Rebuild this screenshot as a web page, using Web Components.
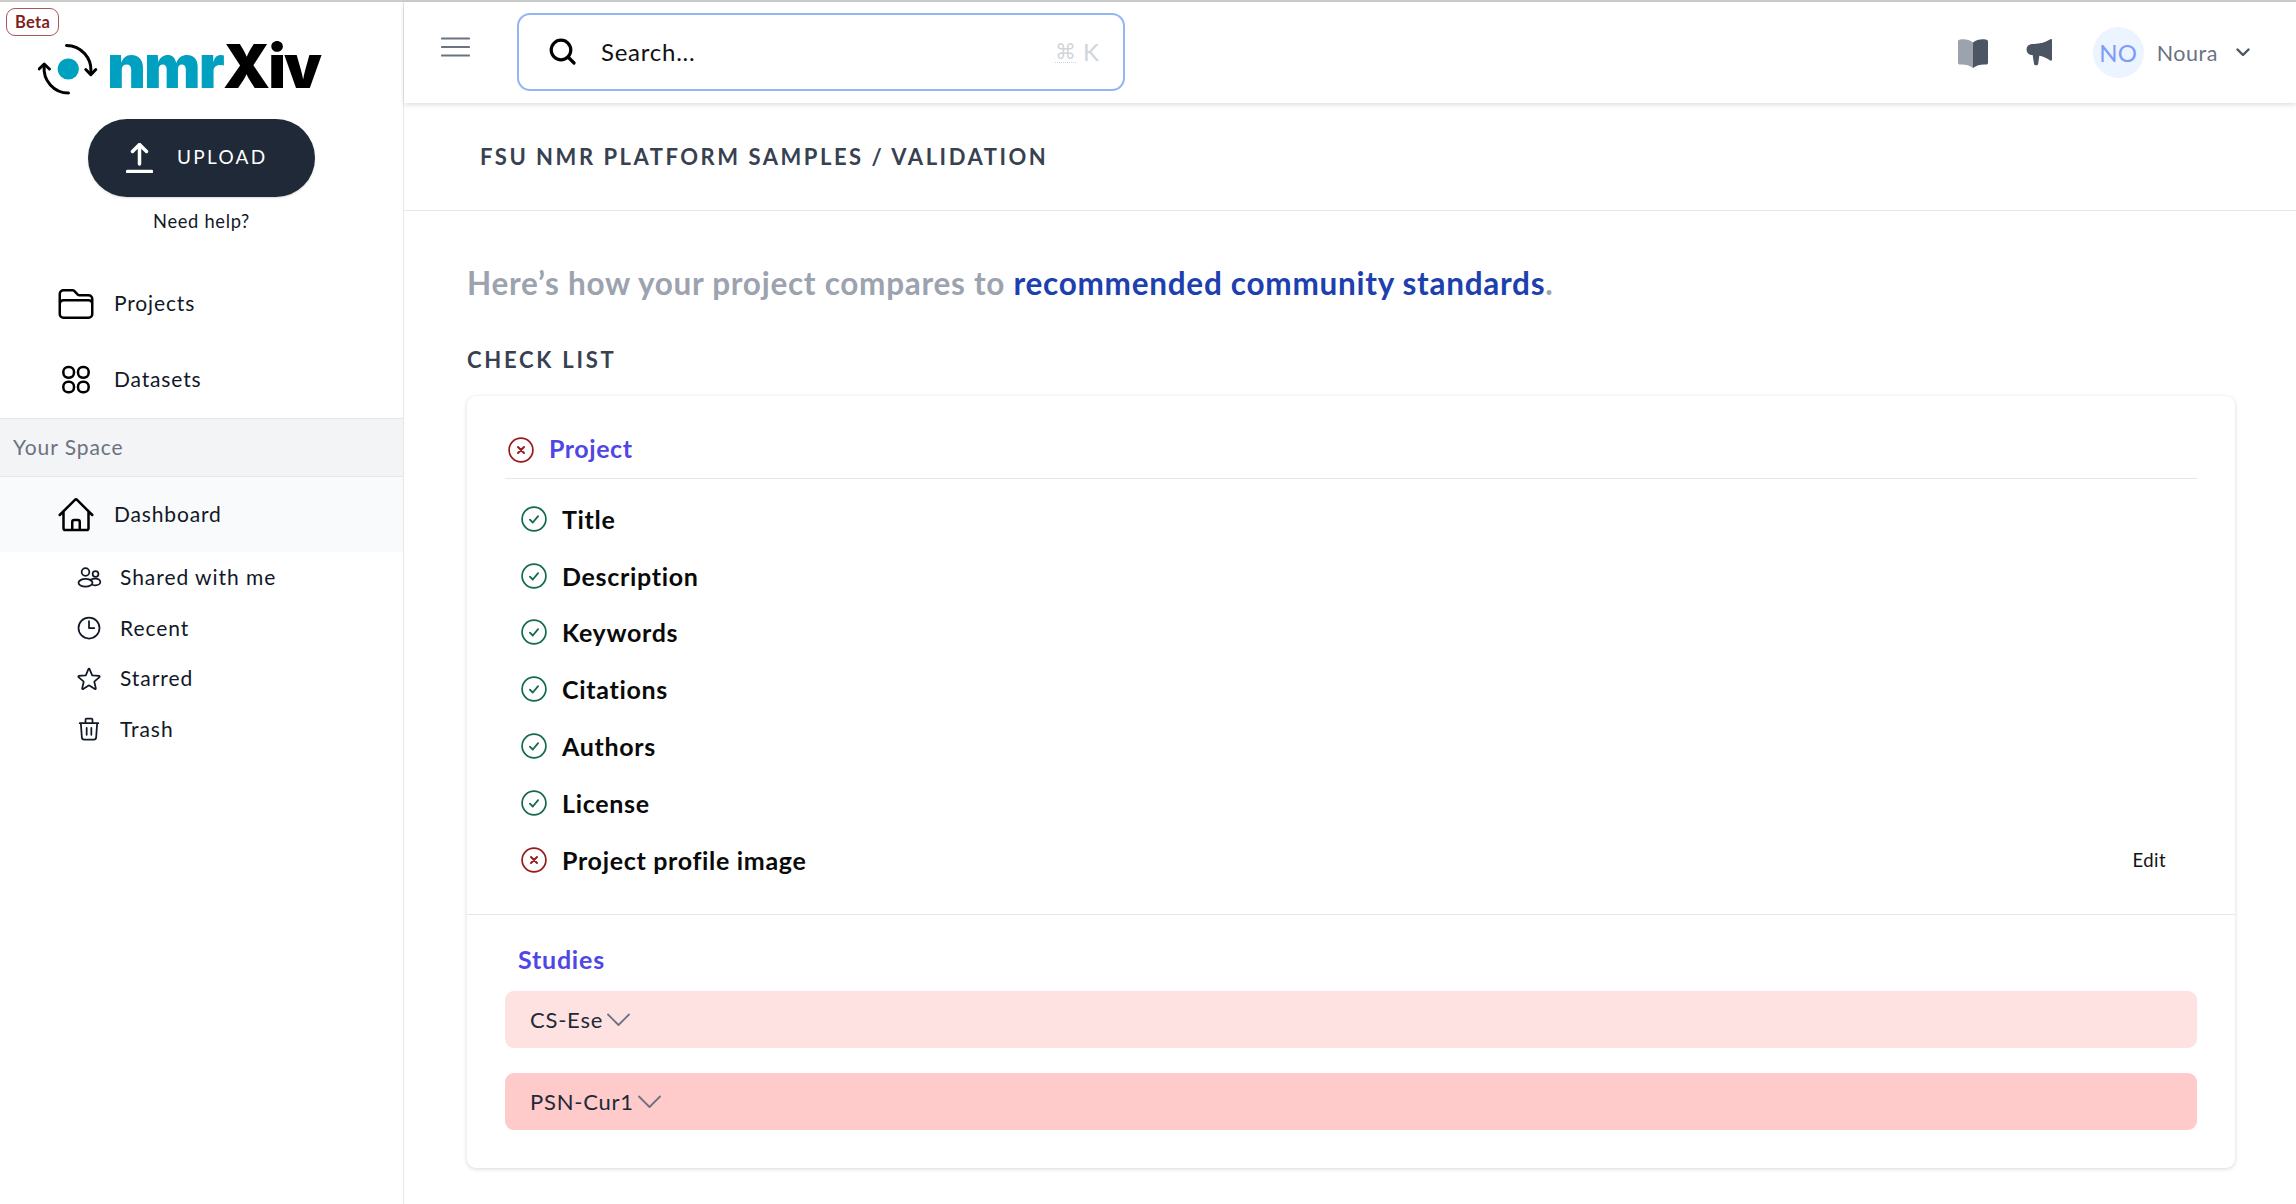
<!DOCTYPE html>
<html lang="en">
<head>
<meta charset="utf-8">
<title>nmrXiv</title>
<style>
html,body{margin:0;padding:0;background:#fff;height:100%;overflow:hidden}
body{font-family:"Lato","Noto Sans",sans-serif;color:#111827}
</style>
</head>
<body>
<nmr-app></nmr-app>
<script>
const hero = {
 folder:'<path d="M2.25 12.75V12A2.25 2.25 0 014.5 9.75h15A2.25 2.25 0 0121.75 12v.75m-8.69-6.44l-2.12-2.12a1.5 1.5 0 00-1.061-.44H4.5A2.25 2.25 0 002.25 6v12a2.25 2.25 0 002.25 2.25h15A2.25 2.25 0 0021.75 18V9a2.25 2.25 0 00-2.25-2.25h-5.379a1.5 1.5 0 01-1.06-.44z"/>',
 grid:'<rect x="4.4" y="4.2" width="6.4" height="6.4" rx="2.9"/><rect x="13.2" y="4.2" width="6.4" height="6.4" rx="2.9"/><rect x="4.4" y="13" width="6.4" height="6.4" rx="2.9"/><rect x="13.2" y="13" width="6.4" height="6.4" rx="2.9"/>',
 home:'<path d="M2.25 12l8.954-8.955c.44-.439 1.152-.439 1.591 0L21.75 12M4.5 9.75v10.125c0 .621.504 1.125 1.125 1.125H9.75v-4.875c0-.621.504-1.125 1.125-1.125h2.25c.621 0 1.125.504 1.125 1.125V21h4.125c.621 0 1.125-.504 1.125-1.125V9.75M8.25 21h8.25"/>',
 users:'<circle cx="9" cy="7.7" r="3.3"/><circle cx="17.6" cy="9.4" r="2.5"/><ellipse cx="9" cy="17" rx="6" ry="3.3"/><path d="M13.6 14.2c1-.5 2.4-.9 3.9-.9 2.3 0 4.2 1.3 4.2 2.9s-1.9 2.9-4.2 2.9c-1 0-1.8-.2-2.6-.5"/>',
 clock:'<path d="M12 6v6h4.5m4.5 0a9 9 0 11-18 0 9 9 0 0118 0z"/>',
 star:'<path d="M11.48 3.499a.562.562 0 011.04 0l2.125 5.111a.563.563 0 00.475.345l5.518.442c.499.04.701.663.321.988l-4.204 3.602a.563.563 0 00-.182.557l1.285 5.385a.562.562 0 01-.84.61l-4.725-2.885a.562.562 0 00-.586 0L6.982 20.54a.562.562 0 01-.84-.61l1.285-5.386a.562.562 0 00-.182-.557l-4.204-3.602a.563.563 0 01.321-.988l5.518-.442a.563.563 0 00.475-.345L11.48 3.5z"/>',
 trash:'<path d="M19 7l-.867 12.142A2 2 0 0116.138 21H7.862a2 2 0 01-1.995-1.858L5 7m5 4v6m4-6v6m1-10V4a1 1 0 00-1-1h-4a1 1 0 00-1 1v3M4 7h16"/>'
};

class NmrIcon extends HTMLElement{
  connectedCallback(){
    const s=this.getAttribute('size')||28, w=this.getAttribute('stroke')||1.5, n=this.getAttribute('name');
    this.attachShadow({mode:'open'}).innerHTML=`<style>:host{display:block;flex:none;width:${s}px;height:${s}px}svg{display:block}</style>
    <svg width="${s}" height="${s}" viewBox="0 0 24 24" fill="none" stroke="currentColor" stroke-width="${w}" stroke-linecap="round" stroke-linejoin="round">${hero[n]}</svg>`;
  }
}
customElements.define('nmr-icon',NmrIcon);

class StatusIcon extends HTMLElement{
  connectedCallback(){
    const ok=this.getAttribute('state')==='ok';
    this.attachShadow({mode:'open'}).innerHTML=`<style>:host{display:block;flex:none;width:26px;height:26px}svg{display:block}</style>
    <svg width="26" height="26" viewBox="0 0 26 26" fill="none" stroke="${ok?'#14694f':'#991b1b'}" stroke-linecap="round" stroke-linejoin="round"><circle cx="13" cy="13" r="11.9" stroke-width="1.7"/>${ok?'<path d="M8.9 13.6l2.9 2.9 5.3-6.4" stroke-width="1.8"/>':'<path d="M10 10l6 6M16 10l-6 6" stroke-width="2"/>'}</svg>`;
  }
}
customElements.define('status-icon',StatusIcon);

class NmrLogo extends HTMLElement{
  constructor(){super();this.attachShadow({mode:'open'}).innerHTML=`<style>
  :host{display:flex;align-items:flex-start;height:54px;margin:39px 0 0 38px;position:relative}
  svg{display:block;flex:none;margin-top:3px}
  .w{font:900 60px/54px "Inter",sans-serif;letter-spacing:-1.9px;margin-left:9px;color:#000;white-space:nowrap;margin-top:-2px}
  .w b{font-weight:900;color:#00a0c0}
  </style>
  <svg width="60" height="52" viewBox="38 44 60 52" fill="none" stroke="#000" stroke-width="3" stroke-linecap="round" stroke-linejoin="round">
    <circle cx="68.3" cy="69" r="10.6" fill="#00a0c0" stroke="none"/>
    <path d="M66.5 45.5A24.500 24.500 0 0 1 90.700 73"/><path d="M85.800 69.500l5 5.200 5-5.200"/>
    <path d="M68.500 93A24.500 24.500 0 0 1 44.200 66"/><path d="M39 69l5.200-5 5.200 5"/>
  </svg>
  <span class="w"><b>nmr</b>Xiv</span>`;}
}
customElements.define('nmr-logo',NmrLogo);

class NavItem extends HTMLElement{
  constructor(){super();this.attachShadow({mode:'open'}).innerHTML=`<style>
  :host{display:flex;align-items:center;height:76px;padding-left:56px;gap:18px;font-size:21px;letter-spacing:.85px;color:#111827}
  :host([active]){background:#f9fafb;height:75px}
  ::slotted(nmr-icon){color:#000}
  span{margin-top:-3px}
  </style><slot name="icon"></slot><span><slot></slot></span>`;}
}
customElements.define('nav-item',NavItem);

class SubItem extends HTMLElement{
  constructor(){super();this.attachShadow({mode:'open'}).innerHTML=`<style>
  :host{display:flex;align-items:center;height:50.700px;padding-left:74.500px;gap:17.500px;font-size:21px;letter-spacing:.95px;color:#111827}
  span{margin-top:-2px}
  </style><slot name="icon"></slot><span><slot></slot></span>`;}
}
customElements.define('sub-item',SubItem);

class NmrSidebar extends HTMLElement{
  constructor(){super();this.attachShadow({mode:'open'}).innerHTML=`<style>
  :host{display:block;flex:none;width:403px;border-right:1px solid #e5e7eb;position:relative;box-sizing:content-box}
  .beta{position:absolute;left:6px;top:6px;box-sizing:border-box;width:53px;height:28px;border:1px solid #a85a5a;border-radius:9px;
    color:#7f1d1d;font-size:16.500px;font-weight:700;display:flex;align-items:center;justify-content:center;letter-spacing:.3px}
  .upload{display:flex;align-items:center;box-sizing:border-box;margin:24px 0 0 88px;width:227px;height:78px;border-radius:39px;background:#1f2937;
    color:#fff;font-size:19px;letter-spacing:2.300px;box-shadow:0 1px 2px rgba(0,0,0,.15);padding-left:38px;gap:24px}
  .upload svg{display:block;flex:none}
  .upload span{margin-top:-3px}
  .help{margin-top:12px;height:24px;line-height:24px;text-align:center;font-size:18.300px;letter-spacing:.7px;color:#111827;padding-bottom:33px}
  .space{box-sizing:border-box;height:59px;background:#f3f4f6;border-top:1px solid #e5e7eb;border-bottom:1px solid #e5e7eb;padding:0 0 2px 13px;
    display:flex;align-items:center;font-size:21px;letter-spacing:.93px;color:#6b7280}
  </style>
  <nmr-logo></nmr-logo>
  <div class="beta">Beta</div>
  <div class="upload">
    <svg width="27" height="30" viewBox="0 0 27 30" fill="none" stroke="#fff" stroke-width="3.500" stroke-linecap="round" stroke-linejoin="round"><path d="M13.500 21V2M6.500 8.500l7-7 7 7"/><path d="M1.500 28.500h24"/></svg>
    <span>UPLOAD</span>
  </div>
  <div class="help">Need help?</div>
  <nav-item><nmr-icon slot="icon" name="folder" size="40"></nmr-icon>Projects</nav-item>
  <nav-item><nmr-icon slot="icon" name="grid" size="40"></nmr-icon>Datasets</nav-item>
  <div class="space">Your Space</div>
  <nav-item active><nmr-icon slot="icon" name="home" size="40"></nmr-icon>Dashboard</nav-item>
  <sub-item><nmr-icon slot="icon" name="users"></nmr-icon>Shared with me</sub-item>
  <sub-item><nmr-icon slot="icon" name="clock"></nmr-icon>Recent</sub-item>
  <sub-item><nmr-icon slot="icon" name="star"></nmr-icon>Starred</sub-item>
  <sub-item><nmr-icon slot="icon" name="trash"></nmr-icon>Trash</sub-item>`;}
}
customElements.define('nmr-sidebar',NmrSidebar);

class NmrHeader extends HTMLElement{
  constructor(){super();this.attachShadow({mode:'open'}).innerHTML=`<style>
  :host{display:flex;align-items:center;height:101px;box-sizing:border-box;padding:0 46px 0 37px;background:#fff;box-shadow:0 2px 5px rgba(0,0,0,.13);position:relative;z-index:1}
  .burger{display:block;flex:none;margin-top:-12px}
  .search{box-sizing:border-box;margin-left:47px;width:608px;height:78px;border:2px solid #93b5f6;border-radius:13px;display:flex;align-items:center;padding:0 24px 0 30px;margin-top:-2px}
  .search svg{display:block;flex:none}
  .ph{margin-left:25px;font-size:24px;color:#111;letter-spacing:.75px}
  .kbd{margin-left:auto;color:#d1d5db;font-size:24px;display:flex;gap:7px;align-items:center}
  .kbd abbr{text-decoration:underline dotted 1px;font-family:"DejaVu Sans",sans-serif;font-size:21px;text-underline-offset:3px}
  .right{margin-left:auto;display:flex;align-items:center}
  .right svg{display:block;flex:none}
  .av{width:51px;height:51px;border-radius:50%;background:#ebf4ff;color:#7f9cf5;font-size:24px;display:flex;align-items:center;justify-content:center;margin-left:41px}
  .name{margin-left:13px;font-size:21.500px;color:#6b7280;letter-spacing:.55px}
  </style>
  <svg class="burger" width="29" height="20" viewBox="0 0 29 20" stroke="#6b7280" stroke-width="2.200" stroke-linecap="round"><path d="M1 1.500h27M1 10h27M1 18.500h27"/></svg>
  <div class="search">
    <svg width="27" height="27" viewBox="0 0 27 27" fill="none" stroke="#000" stroke-width="3.200" stroke-linecap="round"><circle cx="12" cy="12" r="9.800"/><path d="M19 19l6 6"/></svg>
    <span class="ph">Search...</span>
    <span class="kbd"><abbr>⌘</abbr><span>K</span></span>
  </div>
  <div class="right">
    <svg width="30" height="30" viewBox="0 0 30 30"><path fill="#9ca3af" d="M2.500 1.500C7 .8 11.500 1.800 15 4.500V30c-3.500-2.800-8-3.800-12.500-3.500C1 26.700 0 26 0 24.500V3.500C0 2.300 1 1.700 2.500 1.500z"/><path fill="#4b5563" d="M27.500 1.500C23 .8 18.500 1.800 15 4.500V30c3.500-2.800 8-3.800 12.500-3.500 1.500.2 2.500-.5 2.500-2V3.500c0-1.200-1-1.800-2.500-2z"/></svg>
    <svg style="margin-left:38px" width="26" height="27" viewBox="0 0 26 27"><path fill="#4b5563" d="M24.300.3c1-.6 1.700 0 1.700 1V20.500c0 1-.7 1.500-1.700 1C19.500 18 14 16.300 8 16H6A5.500 5.500 0 0 1 6 5h2c6-.3 11.500-1.500 16.300-4.700z"/><path fill="#4b5563" d="M6.500 15h7l-1.300 10c-.2 1.500-3.400 2-4.100.3z"/></svg>
    <div class="av">NO</div>
    <span class="name">Noura</span>
    <svg style="margin-left:18px" width="14" height="9" viewBox="0 0 14 9" fill="none" stroke="#4b5563" stroke-width="2.400" stroke-linecap="round" stroke-linejoin="round"><path d="M1.500 1.500L7 7l5.500-5.500"/></svg>
  </div>`;}
}
customElements.define('nmr-header',NmrHeader);

class CheckItem extends HTMLElement{
  constructor(){super();this.attachShadow({mode:'open'}).innerHTML=`<style>
  :host{display:flex;align-items:center;height:56.800px;padding:0 31px 0 16px;gap:15px;font-size:25px;font-weight:700;letter-spacing:.68px;color:#0a0a0a}
  .act{margin-left:auto;font-size:18.500px;font-weight:400;letter-spacing:.45px;color:#111}
  </style><status-icon state="${this.getAttribute('state')||'ok'}"></status-icon><span><slot></slot></span><span class="act"><slot name="action"></slot></span>`;}
}
customElements.define('check-item',CheckItem);

class StudyBar extends HTMLElement{
  constructor(){super();this.attachShadow({mode:'open'}).innerHTML=`<style>
  :host{display:flex;align-items:center;box-sizing:border-box;height:57px;border-radius:9px;padding-left:25px;gap:4px;font-size:22px;letter-spacing:.77px;color:#1f2937;background:var(--bar,#fee2e2)}
  svg{display:block;flex:none}
  </style><span><slot></slot></span><svg width="23" height="13" viewBox="0 0 23 13" fill="none" stroke="#6b7280" stroke-width="1.800" stroke-linecap="round" stroke-linejoin="round"><path d="M1 1.500L11.500 12 22 1.500"/></svg>`;}
}
customElements.define('study-bar',StudyBar);

class CheckCard extends HTMLElement{
  constructor(){super();this.attachShadow({mode:'open'}).innerHTML=`<style>
  :host{display:block;box-sizing:border-box;height:771.800px;border-radius:9px;background:#fff;box-shadow:0 1px 4px rgba(0,0,0,.16)}
  .top{padding:0 38px 25.600px;border-bottom:1px solid #e5e7eb}
  .head{display:flex;align-items:flex-end;box-sizing:border-box;height:83px;border-bottom:1px solid #e5e7eb;padding:0 0 15px 3px;gap:15px;font-size:25px;font-weight:700;color:#4f46e5;letter-spacing:.55px;margin-bottom:11.400px}
  .bottom{padding:26px 38px 0}
  h3{margin:0 0 14px 13px;font-size:25px;line-height:36px;font-weight:700;color:#4f46e5;letter-spacing:.78px}
  study-bar+study-bar{margin-top:25px;--bar:#fecaca}
  </style>
  <div class="top">
    <div class="head"><status-icon state="bad"></status-icon><span>Project</span></div>
    <check-item>Title</check-item>
    <check-item>Description</check-item>
    <check-item>Keywords</check-item>
    <check-item>Citations</check-item>
    <check-item>Authors</check-item>
    <check-item>License</check-item>
    <check-item state="bad">Project profile image<span slot="action">Edit</span></check-item>
  </div>
  <div class="bottom">
    <h3>Studies</h3>
    <study-bar>CS-Ese</study-bar>
    <study-bar>PSN-Cur1</study-bar>
  </div>`;}
}
customElements.define('check-card',CheckCard);

class NmrApp extends HTMLElement{
  constructor(){super();this.attachShadow({mode:'open'}).innerHTML=`<style>
  :host{display:block;height:1204px;overflow:hidden;font-family:"Lato","Noto Sans",sans-serif}
  .strip{height:2px;background:#ccc}
  .row{display:flex;height:1202px}
  .main{flex:1;min-width:0;display:flex;flex-direction:column}
  .crumb{box-sizing:border-box;height:108px;border-bottom:1px solid #e5e7eb;padding-left:76px;display:flex;align-items:center;font-size:22px;font-weight:700;letter-spacing:2.520px;color:#374151;padding-bottom:1px}
  .content{padding:0 61px 0 63px}
  h1{margin:54px 0 0;height:36px;line-height:36px;font-size:31.500px;font-weight:700;letter-spacing:.72px;color:#9ca3af}
  h1 a{color:#1e40af;text-decoration:none}
  h2{margin:47px 0 0;height:24px;line-height:24px;font-size:22px;font-weight:700;letter-spacing:2.750px;color:#374151}
  check-card{margin-top:24px}
  </style>
  <div class="strip"></div>
  <div class="row">
    <nmr-sidebar></nmr-sidebar>
    <div class="main">
      <nmr-header></nmr-header>
      <div class="crumb">FSU NMR PLATFORM SAMPLES / VALIDATION</div>
      <div class="content">
        <h1>Here’s how your project compares to <a>recommended community standards</a>.</h1>
        <h2>CHECK LIST</h2>
        <check-card></check-card>
      </div>
    </div>
  </div>`;}
}
customElements.define('nmr-app',NmrApp);
</script>
</body>
</html>
